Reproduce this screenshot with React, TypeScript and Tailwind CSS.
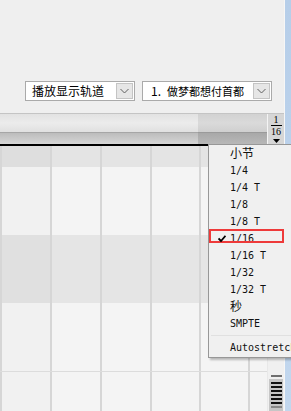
import React from 'react';

const menuItems = ['小节', '1/4', '1/4 T', '1/8', '1/8 T', '1/16', '1/16 T', '1/32', '1/32 T', '秒', 'SMPTE'];

const rows = [
  { h: 'h-[21px]', bg: 'bg-[#e4e4e4]', first: 'bg-[#dedede]' },
  { h: 'h-[68px]', bg: 'bg-[#f4f4f4]', first: 'bg-[#f1f1f1]' },
  { h: 'h-[68px]', bg: 'bg-[#e5e5e5]', first: 'bg-[#e0e0e0]' },
  { h: 'h-[69px] border-b border-[#dcdcdc]', bg: 'bg-[#f4f4f4]', first: 'bg-[#f1f1f1]' },
  { h: 'flex-1', bg: 'bg-[#f4f4f4]', first: 'bg-[#f1f1f1]' },
];

const widths = ['w-[50px]', 'w-[50px]', 'w-[50px]', 'w-[49px]', 'w-[49px]'];

const Chevron = () => (
  <svg width="9" height="6" viewBox="0 0 9 6">
    <path d="M0.5 1 L4.5 5 L8.5 1" fill="none" stroke="#606060" strokeWidth="1" />
  </svg>
);

const Select: React.FC<{ children: React.ReactNode; w: string }> = ({ children, w }) => (
  <div className={`${w} h-[20px] flex bg-white border border-[#aaaaaa]`}>
    <div className="flex-1 min-w-0 overflow-hidden flex items-center pl-[6px] text-[12px] text-black whitespace-nowrap leading-none">{children}</div>
    <div className="w-[17px] shrink-0 m-[1px] flex items-center justify-center bg-[#e6e6e6] border border-[#c4c4c4]">
      <Chevron />
    </div>
  </div>
);

const App: React.FC = () => {
  return (
    <div
      className="relative w-[291px] h-[411px] overflow-hidden flex bg-[#efefef]"
      style={{ fontFamily: '"Noto Sans CJK SC", "Noto Sans", sans-serif' }}
    >
      <div className="flex-1 flex flex-col">
        {/* toolbar */}
        <div className="h-[113px] flex items-start gap-[7px] pt-[81px] pl-[25px]">
          <Select w="w-[110px]">播放显示轨道</Select>
          <Select w="w-[130px]">
            <span className="pl-[2px] w-[18px] shrink-0">1.</span>
            <span className="shrink-0 text-[11px]">做梦都想付首都</span>
          </Select>
        </div>

        {/* ruler */}
        <div className="h-[33px] flex border-t border-[#c4c4c4] border-b-2 border-b-black">
          <div className="w-[198px] flex flex-col">
            <div className="h-[18px] bg-gradient-to-b from-[#e2e2e2] via-[#ececec] to-[#e0e0e0]" />
            <div className="h-[1px] bg-[#a6a6a6]" />
            <div className="flex-1 bg-gradient-to-b from-[#bcbcbc] to-[#d6d6d6]" />
          </div>
          <div className="flex-1 flex flex-col">
            <div className="h-[18px] bg-gradient-to-b from-[#d2d2d2] via-[#dadada] to-[#cfcfcf]" />
            <div className="h-[1px] bg-[#9a9a9a]" />
            <div className="flex-1 bg-gradient-to-b from-[#a8a8a8] to-[#b8b8b8]" />
          </div>
          <div
            className="w-[17px] flex flex-col items-center bg-[#d6d6d6] border-l border-[#f4f4f4] text-black text-[10px] leading-[9px] pt-[1px]"
            style={{ fontFamily: '"Liberation Serif", serif' }}
          >
            <div className="h-[9px]">1</div>
            <div className="w-[11px] h-[1px] bg-black my-[1px] shrink-0" />
            <div className="h-[9px]">16</div>
            <svg width="7" height="4" viewBox="0 0 7 4" className="mt-[3px] shrink-0">
              <path d="M0 0 H7 L3.5 4 Z" fill="#000" />
            </svg>
          </div>
        </div>

        {/* grid */}
        <div className="flex-1 flex">
          <div className="flex-1 flex flex-col">
            {rows.map((r, i) => (
              <div key={i} className={`flex ${r.h}`}>
                {widths.map((w, j) => (
                  <div key={j} className={`${w} border-l-2 border-[#d6d6d6] ${j === 0 ? r.first : r.bg}`} />
                ))}
                <div className={`flex-1 border-l-2 border-[#d6d6d6] ${r.bg}`} />
              </div>
            ))}
          </div>
          <div className="w-[17px] flex flex-col items-center border-l border-[#e8e8e8] bg-[#f0f0f0] pt-[229px]">
            <div className="w-[11px] h-[2px] bg-[#6e6e6e]" />
            <div className="mt-[2px] w-[14px] flex-1 bg-[#c6c6c6] flex flex-col items-center gap-[2px] pt-[3px]">
              <div className="w-[11px] h-[2px] bg-[#111]" />
              <div className="w-[11px] h-[2px] bg-[#111]" />
              <div className="w-[11px] h-[2px] bg-[#111]" />
              <div className="w-[11px] h-[2px] bg-[#111]" />
              <div className="w-[11px] h-[2px] bg-[#111]" />
              <div className="w-[11px] h-[2px] bg-[#111]" />
              <div className="w-[11px] h-[2px] bg-[#888]" />
            </div>
          </div>
        </div>
      </div>

      {/* window edge */}
      <div className="w-[7px] border-l border-[#f6f6f6] bg-gradient-to-b from-[#b6cee9] to-[#c2d7ee]" />

      {/* popup menu */}
      <div
        className="absolute left-[208px] top-[144px] w-[100px] pb-[1px] bg-[#f0f0f0] border border-[#979797] shadow-[2px_2px_2px_rgba(0,0,0,0.25)] text-[10px] text-[#111]"
        style={{ fontFamily: '"DejaVu Sans Mono", "Noto Sans CJK SC", monospace' }}
      >
        {menuItems.map((m) => (
          <div key={m} className="relative h-[17px] flex items-center pl-[21px] whitespace-pre">
            {m === '1/16' && (
              <>
                <div className="absolute left-0 top-[-1px] w-[75px] h-[14px] border-2 border-[#ee3a3a]" />
                <svg width="8" height="7" viewBox="0 0 8 7" className="absolute left-[9px] top-[5px]">
                  <path d="M0.5 3.5 L3 6 L7.5 0.8" fill="none" stroke="#000" strokeWidth="1.8" />
                </svg>
              </>
            )}
            <span className={/[\u4e00-\u9fff]/.test(m) ? 'text-[12px]' : ''}>{m}</span>
          </div>
        ))}
        <div className="h-[7px] flex items-center px-[2px]">
          <div className="w-full h-[1px] bg-[#e0e0e0]" />
        </div>
        <div className="h-[17px] flex items-center pl-[21px] whitespace-nowrap">Autostretch</div>
      </div>
    </div>
  );
};

export default App;
